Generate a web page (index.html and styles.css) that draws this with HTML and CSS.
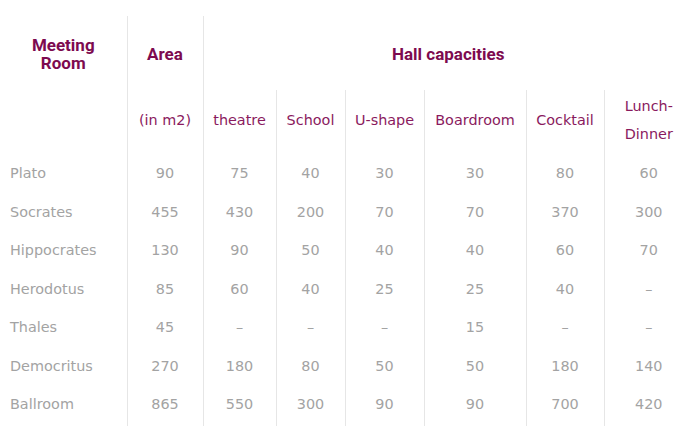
FILE: index.html
```html
<!DOCTYPE html>
<html>
<head>
<meta charset="utf-8">
<link rel="stylesheet" href="styles.css">
</head>
<body>
<table class="halls">
  <colgroup>
    <col class="c-name">
    <col class="c-area">
    <col class="c-theatre">
    <col class="c-school">
    <col class="c-ushape">
    <col class="c-board">
    <col class="c-cocktail">
    <col class="c-lunch">
  </colgroup>
  <thead>
    <tr class="head-main">
      <th class="first">Meeting<br>Room</th>
      <th class="sep">Area</th>
      <th class="sep" colspan="6">Hall capacities</th>
    </tr>
    <tr class="head-sub">
      <th class="first"></th>
      <th class="sep">(in m2)</th>
      <th class="sep">theatre</th>
      <th class="sep">School</th>
      <th class="sep">U-shape</th>
      <th class="sep">Boardroom</th>
      <th class="sep">Cocktail</th>
      <th class="sep">Lunch-<br>Dinner</th>
    </tr>
  </thead>
  <tbody>
    <tr><td class="name">Plato</td><td>90</td><td>75</td><td>40</td><td>30</td><td>30</td><td>80</td><td>60</td></tr>
    <tr><td class="name">Socrates</td><td>455</td><td>430</td><td>200</td><td>70</td><td>70</td><td>370</td><td>300</td></tr>
    <tr><td class="name">Hippocrates</td><td>130</td><td>90</td><td>50</td><td>40</td><td>40</td><td>60</td><td>70</td></tr>
    <tr><td class="name">Herodotus</td><td>85</td><td>60</td><td>40</td><td>25</td><td>25</td><td>40</td><td>–</td></tr>
    <tr><td class="name">Thales</td><td>45</td><td>–</td><td>–</td><td>–</td><td>15</td><td>–</td><td>–</td></tr>
    <tr><td class="name">Democritus</td><td>270</td><td>180</td><td>80</td><td>50</td><td>50</td><td>180</td><td>140</td></tr>
    <tr class="last"><td class="name">Ballroom</td><td>865</td><td>550</td><td>300</td><td>90</td><td>90</td><td>700</td><td>420</td></tr>
  </tbody>
</table>
</body>
</html>
```
FILE: styles.css
```css
html, body {
  margin: 0;
  padding: 0;
  background: #ffffff;
}

body {
  padding-top: 16px;
}

.halls {
  width: 693px;
  table-layout: fixed;
  border-collapse: collapse;
  border-spacing: 0;
  font-family: "DejaVu Sans", Verdana, sans-serif;
  font-size: 14.4px;
}

.c-name { width: 127px; }
.c-area { width: 76px; }
.c-theatre { width: 73px; }
.c-school { width: 69px; }
.c-ushape { width: 79px; }
.c-board { width: 102px; }
.c-cocktail { width: 78px; }
.c-lunch { width: 89px; }

.halls th,
.halls td {
  padding: 0;
  text-align: center;
  vertical-align: middle;
}

.halls th.sep,
.halls td + td {
  border-left: 1px solid #e6e6e6;
}

.head-main th {
  height: 74px;
  font-family: Roboto, "Liberation Sans", sans-serif;
  font-weight: 700;
  font-size: 17px;
  line-height: 18px;
  color: #7d0a4f;
  padding-top: 2px;
  box-sizing: border-box;
}

.head-sub th {
  height: 64px;
  font-weight: 400;
  font-size: 14.4px;
  line-height: 28px;
  color: #8a1a5e;
  padding-bottom: 4px;
  box-sizing: border-box;
}

.halls td {
  height: 38.5px;
  color: #a3a3a3;
  line-height: 20px;
}

.halls td.name {
  text-align: left;
  padding-left: 10px;
}

.halls tr.last td {
  height: 41px;
  padding-bottom: 3px;
  box-sizing: border-box;
}
```
